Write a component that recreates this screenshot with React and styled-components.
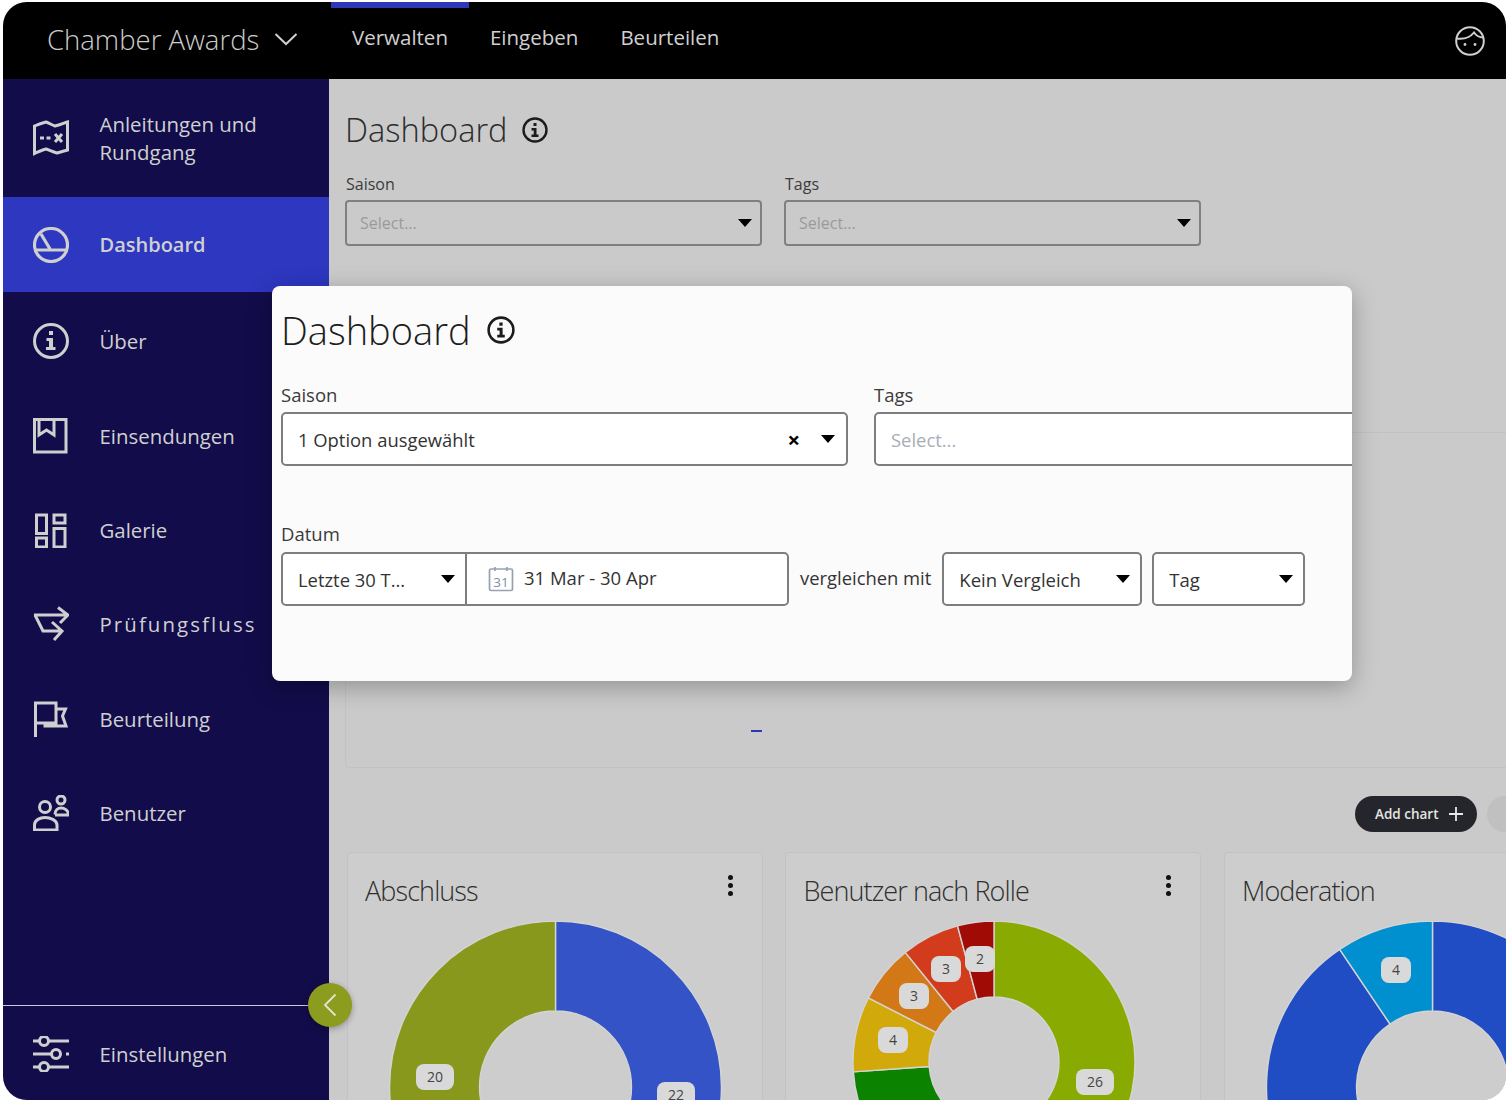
import styled, { createGlobalStyle } from 'styled-components';

const NAV_ITEMS = [
  { label: 'Über', icon: 'info' },
  { label: 'Einsendungen', icon: 'book' },
  { label: 'Galerie', icon: 'grid' },
  { label: 'Prüfungsfluss', icon: 'flow', wide: true },
  { label: 'Beurteilung', icon: 'flag' },
  { label: 'Benutzer', icon: 'users' },
];

const CHARTS = [
  {
    title: 'Abschluss',
    menu: true,
    cx: 207.5,
    cy: 166,
    outer: 166,
    inner: 76,
    segments: [
      { from: 0, to: 180, color: '#3353c6' },
      { from: 180, to: 360, color: '#88981c' },
    ],
    labels: [
      { x: 87, y: 156, text: '20' },
      { x: 328, y: 174, text: '22' },
    ],
  },
  {
    title: 'Benutzer nach Rolle',
    menu: true,
    cx: 208,
    cy: 141,
    outer: 141,
    inner: 65,
    segments: [
      { from: 0, to: 203, color: '#89aa00' },
      { from: 203, to: 266, color: '#0b8300' },
      { from: 266, to: 297, color: '#d2a90b' },
      { from: 297, to: 321, color: '#d27817' },
      { from: 321, to: 345, color: '#d23c1c' },
      { from: 345, to: 360, color: '#a10b05' },
    ],
    labels: [
      { x: 194, y: 38, text: '2' },
      { x: 160, y: 48, text: '3' },
      { x: 128, y: 75, text: '3' },
      { x: 107, y: 119, text: '4' },
      { x: 309, y: 161, text: '26' },
    ],
  },
  {
    title: 'Moderation',
    cx: 207.5,
    cy: 166,
    outer: 166,
    inner: 76,
    segments: [
      { from: 0, to: 326, color: '#204cc4' },
      { from: 326, to: 360, color: '#0090d0' },
    ],
    labels: [{ x: 171, y: 49, text: '4' }],
  },
];

const polar = (cx, cy, r, deg) => {
  const rad = (deg * Math.PI) / 180;
  return [cx + r * Math.sin(rad), cy - r * Math.cos(rad)];
};

const arcPath = (cx, cy, outer, inner, from, to) => {
  const large = to - from > 180 ? 1 : 0;
  const [x1, y1] = polar(cx, cy, outer, from);
  const [x2, y2] = polar(cx, cy, outer, to);
  const [x3, y3] = polar(cx, cy, inner, to);
  const [x4, y4] = polar(cx, cy, inner, from);
  return `M${x1} ${y1}A${outer} ${outer} 0 ${large} 1 ${x2} ${y2}L${x3} ${y3}A${inner} ${inner} 0 ${large} 0 ${x4} ${y4}Z`;
};

const Icon = ({ name }) => {
  const common = { width: 36, height: 36, viewBox: '0 0 36 36', fill: 'none', stroke: '#cfcfcf', strokeWidth: 3 };
  switch (name) {
    case 'map':
      return (
        <svg {...common}>
          <path d="M1.5 6 C6 4 9 3 13 2 C16 3 19 5 22 6 C27 5 31 3 34.5 2 V30 C31 31 27 32 24 33 C20 32 16 30 13 29 C9 30 5 32 1.5 33.5Z" />
          <path d="M7 18h4M13.5 18h4M22 14l7 8M29 14l-7 8" strokeWidth="3" />
        </svg>
      );
    case 'gauge':
      return (
        <svg {...common}>
          <circle cx="18" cy="18" r="16.5" strokeWidth="3.2" />
          <path d="M2 23H34M8 7L17 22" strokeWidth="3.2" />
        </svg>
      );
    case 'info':
      return (
        <svg {...common}>
          <circle cx="18" cy="18" r="16.5" />
          <path d="M16 8h4v4h-4zM13.5 15h6.500v9h2.500v3h-9.500v-3h3v-6h-2.500z" fill="#cfcfcf" stroke="none" />
        </svg>
      );
    case 'book':
      return (
        <svg {...common}>
          <path d="M1.5 1.5H33V34H1.5ZM6 1.5V17L13.5 12L21 17V1.5" />
        </svg>
      );
    case 'grid':
      return (
        <svg {...common}>
          <path d="M3.5 3H13.5V21.500H3.5ZM21 3H32V11H21ZM3.5 26H13.5V35H3.5ZM21 16.500H32V35H21Z" />
        </svg>
      );
    case 'flow':
      return (
        <svg {...common}>
          <path d="M1 9H34M25 1.5L35 9L27 17M2 9L10 25H29M19 16L29 25L21 34" />
        </svg>
      );
    case 'flag':
      return (
        <svg {...common}>
          <path d="M2.5 36V2H23V22H2.5M23 8H32.500L29.500 15L33 25H12V22" />
        </svg>
      );
    case 'users':
      return (
        <svg {...common}>
          <circle cx="12" cy="12" r="5.5" />
          <path d="M1.5 35V30C1.5 25 7 22.500 12 22.500S24 25 24 30V35Z" />
          <circle cx="28" cy="5" r="4" />
          <path d="M22 19.500C22 15 25 13 28 13S35.500 15 35.500 20H22" />
        </svg>
      );
    case 'sliders':
      return (
        <svg {...common}>
          <circle cx="11" cy="5" r="4.5" />
          <circle cx="23" cy="18" r="4.5" />
          <circle cx="11" cy="31" r="4.5" />
          <path d="M0 5H6M16 5H36M0 18H18M33 18H36M0 31H6M16 31H36" />
        </svg>
      );
    default:
      return null;
  }
};

const InfoIcon = ({ size }) => (
  <svg width={size} height={size} viewBox="0 0 26 26" fill="none">
    <circle cx="13" cy="13" r="11.5" stroke="#1c1c1c" strokeWidth="2.4" />
    <path d="M11.5 6h3v3h-3zM9.500 11h5v6.500h2V20h-7v-2.500h2.200v-4H9.500z" fill="#1c1c1c" />
  </svg>
);

const Donut = ({ cx, cy, outer, inner, segments, labels }) => (
  <StChart viewBox="0 0 414 190" width="414" height="190">
    {segments.map((s) => (
      <path key={s.color} d={arcPath(cx, cy, outer, inner, s.from, s.to)} fill={s.color} stroke="#d4d4d4" strokeWidth="1.4" />
    ))}
    {labels.map((l) => {
      const w = l.text.length > 1 ? 38 : 30;
      return (
        <g key={`${l.x}-${l.text}`}>
          <rect x={l.x - w / 2} y={l.y - 13} width={w} height="26" rx="8" fill="#d9d9d9" />
          <text x={l.x} y={l.y + 5} textAnchor="middle" fontFamily="'Open Sans', sans-serif" fontSize="14" fill="#444">
            {l.text}
          </text>
        </g>
      );
    })}
  </StChart>
);

const App = () => {
  return (
    <>
      <StGlobal />
      <StFrame>
        <StTopBar>
          <StBrand>
            Chamber Awards
            <svg width="24" height="14" viewBox="0 0 24 14" fill="none">
              <path d="M1.5 2L12 12L22.5 2" stroke="#cfcfcf" strokeWidth="2" />
            </svg>
          </StBrand>
          <StTab $active>Verwalten</StTab>
          <StTab>Eingeben</StTab>
          <StTab>Beurteilen</StTab>
          <StAvatar>
            <svg width="30" height="30" viewBox="0 0 30 30" fill="none" stroke="#cfcfcf" strokeWidth="2">
              <circle cx="15" cy="15" r="13.8" />
              <path d="M1.8 12.5C10 13.5 15 11.5 19 6.5C21.5 10 25 11.5 28.2 11.5" />
              <circle cx="10" cy="18.5" r="1.4" fill="#cfcfcf" stroke="none" />
              <circle cx="20" cy="18.5" r="1.4" fill="#cfcfcf" stroke="none" />
            </svg>
          </StAvatar>
        </StTopBar>
        <StBody>
          <StSidebar>
            <StNavItem $height="118px">
              <Icon name="map" />
              <span>
                Anleitungen und
                <br />
                Rundgang
              </span>
            </StNavItem>
            <StNavItem $active $height="95px">
              <Icon name="gauge" />
              <span>Dashboard</span>
            </StNavItem>
            <StNavGroup>
              {NAV_ITEMS.map((item) => (
                <StNavItem key={item.label} $height="94.4px" $wide={item.wide}>
                  <Icon name={item.icon} />
                  <span>{item.label}</span>
                </StNavItem>
              ))}
            </StNavGroup>
            <StSidebarFooter>
              <StNavItem $height="93px">
                <Icon name="sliders" />
                <span>Einstellungen</span>
              </StNavItem>
            </StSidebarFooter>
          </StSidebar>
          <StMain>
            <StPageTitle>
              Dashboard
              <InfoIcon size={26} />
            </StPageTitle>
            <StFilterRow>
              <StField>
                <StFieldLabel>Saison</StFieldLabel>
                <StDimSelect>
                  Select...
                  <StArrow />
                </StDimSelect>
              </StField>
              <StField>
                <StFieldLabel>Tags</StFieldLabel>
                <StDimSelect>
                  Select...
                  <StArrow />
                </StDimSelect>
              </StField>
            </StFilterRow>
            <StPanel>
              <StDash />
            </StPanel>
            <StToolbar>
              <StAddChart>
                Add chart
                <svg width="14" height="14" viewBox="0 0 14 14" stroke="#e8e8e8" strokeWidth="1.8">
                  <path d="M7 0V14M0 7H14" />
                </svg>
              </StAddChart>
              <StGhostButton />
            </StToolbar>
            <StCardRow>
              {CHARTS.map((chart) => (
                <StCard key={chart.title}>
                  <StCardHeader>
                    <StCardTitle>{chart.title}</StCardTitle>
                    {chart.menu && (
                      <StKebab>
                        <i />
                        <i />
                        <i />
                      </StKebab>
                    )}
                  </StCardHeader>
                  <Donut {...chart} />
                </StCard>
              ))}
            </StCardRow>
          </StMain>
        </StBody>
        <StToggle>
          <svg width="14" height="24" viewBox="0 0 14 24" fill="none">
            <path d="M12.5 1.5L2 12L12.5 22.5" stroke="#e4e4d0" strokeWidth="1.8" />
          </svg>
        </StToggle>
        <StPopup>
          <StPopupTitle>
            Dashboard
            <InfoIcon size={28} />
          </StPopupTitle>
          <StPopupRow>
            <StPopupField $width="567px">
              <StPopupLabel>Saison</StPopupLabel>
              <StSelect>
                1 Option ausgewählt
                <StClear>×</StClear>
                <StArrow />
              </StSelect>
            </StPopupField>
            <StPopupField $width="560px">
              <StPopupLabel>Tags</StPopupLabel>
              <StSelect $placeholder>Select...</StSelect>
            </StPopupField>
          </StPopupRow>
          <StPopupLabel $spaced>Datum</StPopupLabel>
          <StDateRow>
            <StDateGroup>
              <StRangeSelect>
                Letzte 30 T...
                <StArrow />
              </StRangeSelect>
              <StDateInput>
                <svg width="26" height="26" viewBox="0 0 26 26" fill="none" stroke="#98a0b4" strokeWidth="1.7">
                  <path d="M7 3H3a1.500 1.500 0 0 0-1.500 1.500v18.500A1.500 1.500 0 0 0 3 24.500h20a1.500 1.500 0 0 0 1.500-1.500V4.500A1.500 1.500 0 0 0 23 3h-4M7 1v4M19 1v4M7 3h12" />
                  <text x="13" y="20.500" textAnchor="middle" fontFamily="'Open Sans', sans-serif" fontSize="13.5" fill="#868da2" stroke="none">
                    31
                  </text>
                </svg>
                <StDateText>31 Mar - 30 Apr</StDateText>
              </StDateInput>
            </StDateGroup>
            <StCompareLabel>vergleichen mit</StCompareLabel>
            <StSmallSelect $width="200px">
              Kein Vergleich
              <StArrow />
            </StSmallSelect>
            <StSmallSelect $width="153px">
              Tag
              <StArrow />
            </StSmallSelect>
          </StDateRow>
        </StPopup>
      </StFrame>
    </>
  );
};

export default App;

const StGlobal = createGlobalStyle`
  * {
    box-sizing: border-box;
  }

  body {
    margin: 0;
    background: #ffffff;
    font-family: 'Open Sans', sans-serif;
  }
`;

const StFrame = styled.div`
  position: relative;
  width: 1503px;
  height: 1098px;
  margin: 2px 0 0 3px;
  display: flex;
  flex-direction: column;
  border-radius: 24px;
  overflow: hidden;
  background: #cacaca;
`;

const StTopBar = styled.header`
  height: 77px;
  flex-shrink: 0;
  display: flex;
  align-items: stretch;
  background: #000000;
`;

const StBrand = styled.div`
  width: 328px;
  padding: 0 0 3px 44px;
  display: flex;
  align-items: center;
  gap: 15px;
  color: #cccccc;
  font-size: 27.5px;
  font-weight: 300;
`;

const StTab = styled.div`
  padding: 0 21px 14px;
  display: flex;
  align-items: center;
  border-top: 6px solid ${({ $active }) => ($active ? '#2d37b8' : 'transparent')};
  color: #d0d0d0;
  font-size: 20.5px;
`;

const StAvatar = styled.div`
  margin-left: auto;
  padding-right: 21px;
  display: flex;
  align-items: center;
`;

const StBody = styled.div`
  flex: 1;
  min-height: 0;
  display: flex;
`;

const StSidebar = styled.nav`
  width: 326px;
  flex-shrink: 0;
  display: flex;
  flex-direction: column;
  background: #120c4a;
`;

const StNavGroup = styled.div`
  padding-top: 2px;
  flex: 1;
`;

const StNavItem = styled.div`
  height: ${({ $height }) => $height};
  padding-left: 30px;
  display: flex;
  align-items: center;
  gap: 30.5px;
  background: ${({ $active }) => ($active ? '#2d37c0' : 'transparent')};
  color: #d0d0d0;
  font-size: ${({ $active }) => ($active ? '20px' : '20.4px')};
  font-weight: ${({ $active }) => ($active ? 600 : 400)};
  letter-spacing: ${({ $wide }) => ($wide ? '2.1px' : 'normal')};
  line-height: 28px;
`;

const StSidebarFooter = styled.div`
  flex-shrink: 0;
  height: 95px;
  padding-top: 1px;
  margin-right: 20px;
  border-top: 1.5px solid #c9c9d4;
`;

const StMain = styled.main`
  flex: 1;
  min-width: 0;
  padding: 29px 0 0 16px;
  overflow: hidden;
  background: #cacaca;
`;

const StPageTitle = styled.h1`
  margin: 0;
  height: 44px;
  display: flex;
  align-items: center;
  gap: 14px;
  color: #2c2c2c;
  font-size: 32.6px;
  font-weight: 300;
  line-height: 44px;
`;

const StFilterRow = styled.div`
  margin-top: 21px;
  display: flex;
  gap: 22px;
`;

const StField = styled.div`
  width: 417px;
`;

const StFieldLabel = styled.div`
  margin-bottom: 5px;
  padding-left: 1px;
  color: #3c3c3c;
  font-size: 16px;
  line-height: 22px;
`;

const StDimSelect = styled.div`
  height: 46px;
  padding: 0 8px 0 13px;
  display: flex;
  align-items: center;
  justify-content: space-between;
  border: 2px solid #808080;
  border-radius: 4px;
  color: #9a9a9a;
  font-size: 16px;
`;

const StPanel = styled.section`
  width: 1200px;
  height: 336px;
  margin-top: 186px;
  padding: 297px 0 0 405px;
  border: 1px solid #c2c2c2;
  border-radius: 4px;
`;

const StDash = styled.div`
  width: 11px;
  height: 2px;
  background: #2d37b8;
`;

const StToolbar = styled.div`
  margin: 28px -21px 0 0;
  display: flex;
  justify-content: flex-end;
  align-items: center;
  gap: 10px;
`;

const StAddChart = styled.div`
  width: 122px;
  height: 36px;
  padding: 0 14px 0 20px;
  display: flex;
  align-items: center;
  justify-content: space-between;
  border-radius: 18px;
  background: #24262b;
  color: #e4e4e4;
  font-size: 13.5px;
  font-weight: 600;
`;

const StGhostButton = styled.div`
  width: 40px;
  height: 36px;
  border-radius: 18px;
  background: #c0c0c0;
`;

const StCardRow = styled.div`
  margin: 20px 0 0 1.500px;
  display: flex;
  gap: 22.5px;
`;

const StCard = styled.article`
  width: 416px;
  flex-shrink: 0;
  height: 300px;
  border: 1px solid #c2c2c2;
  border-radius: 4px;
  background: #cdcdcd;
`;

const StCardHeader = styled.div`
  height: 67.5px;
  padding: 19px 29px 0 17.500px;
  display: flex;
  justify-content: space-between;
  align-items: flex-start;
`;

const StCardTitle = styled.h2`
  margin: 0;
  color: #2f2f2f;
  font-size: 27px;
  font-weight: 300;
  letter-spacing: -0.9px;
  line-height: 38px;
`;

const StKebab = styled.div`
  display: flex;
  flex-direction: column;
  gap: 3px;
  padding-top: 3px;

  i {
    display: block;
    width: 5px;
    height: 5px;
    border-radius: 50%;
    background: #111111;
  }
`;

const StChart = styled.svg`
  display: block;
`;

const StArrow = styled.span`
  flex-shrink: 0;
  width: 0;
  height: 0;
  border-left: 7px solid transparent;
  border-right: 7px solid transparent;
  border-top: 8px solid #000000;
`;

const StToggle = styled.div`
  position: absolute;
  left: 305px;
  top: 981px;
  width: 44px;
  height: 44px;
  display: flex;
  align-items: center;
  justify-content: center;
  border-radius: 50%;
  background: #8c9c1e;
  box-shadow: 0 2px 6px rgba(0, 0, 0, 0.3);
`;

const StPopup = styled.section`
  position: absolute;
  left: 269px;
  top: 284px;
  width: 1080px;
  height: 395px;
  padding: 16px 0 0 9px;
  overflow: hidden;
  border-radius: 8px;
  background: #fbfbfb;
  box-shadow: 0 6px 24px rgba(0, 0, 0, 0.28);
`;

const StPopupTitle = styled.h2`
  margin: 0 0 26px;
  height: 56px;
  display: flex;
  align-items: center;
  gap: 16px;
  color: #1d1d1d;
  font-size: 38px;
  font-weight: 300;
  line-height: 56px;
`;

const StPopupRow = styled.div`
  display: flex;
  gap: 26px;
`;

const StPopupField = styled.div`
  width: ${({ $width }) => $width};
  flex-shrink: 0;
`;

const StPopupLabel = styled.div`
  margin: ${({ $spaced }) => ($spaced ? '57px 0 7px' : '0 0 6px')};
  color: #3a3a3a;
  font-size: 18.5px;
  line-height: 22px;
`;

const StSelect = styled.div`
  height: 54px;
  padding: 0 11px 0 15px;
  display: flex;
  align-items: center;
  border: 2px solid #7e7e7e;
  border-radius: 5px;
  background: #ffffff;
  color: ${({ $placeholder }) => ($placeholder ? '#a9adb8' : '#333333')};
  font-size: 18.4px;
`;

const StClear = styled.span`
  margin: 0 21px 0 auto;
  color: #000000;
  font-size: 22px;
  font-weight: 700;
`;

const StDateRow = styled.div`
  display: flex;
  align-items: center;
`;

const StDateGroup = styled.div`
  width: 508px;
  height: 54px;
  display: flex;
  border: 2px solid #7e7e7e;
  border-radius: 5px;
  background: #ffffff;
`;

const StRangeSelect = styled.div`
  width: 184px;
  padding: 0 10px 0 15px;
  display: flex;
  align-items: center;
  justify-content: space-between;
  border-right: 2px solid #7e7e7e;
  color: #333333;
  font-size: 18.4px;
`;

const StDateInput = styled.div`
  flex: 1;
  padding-left: 21px;
  display: flex;
  align-items: center;
  gap: 10px;
  color: #333333;
  font-size: 18.5px;
`;

const StDateText = styled.span`
  margin-bottom: 4px;
`;

const StCompareLabel = styled.span`
  margin: 0 11px 3px;
  color: #333333;
  font-size: 18.4px;
`;

const StSmallSelect = styled.div`
  width: ${({ $width }) => $width};
  height: 54px;
  margin-right: 10px;
  padding: 0 10px 0 15px;
  display: flex;
  align-items: center;
  justify-content: space-between;
  border: 2px solid #7e7e7e;
  border-radius: 5px;
  background: #ffffff;
  color: #333333;
  font-size: 18.5px;
`;
